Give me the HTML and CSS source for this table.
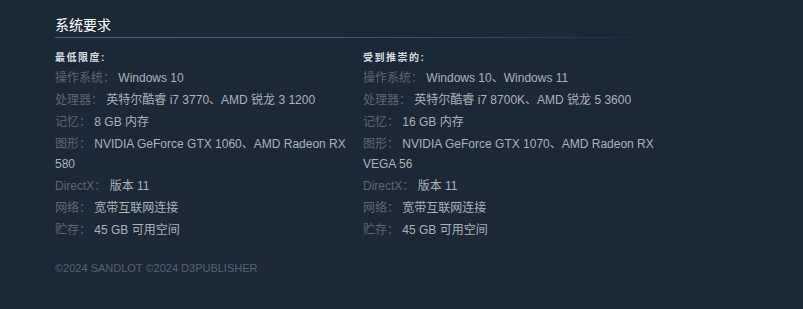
FILE: index.html
```html
<!DOCTYPE html>
<html lang="zh-CN">
<head>
<meta charset="utf-8">
<title>系统要求</title>
<link rel="stylesheet" href="styles.css">
</head>
<body>
<div class="page">
  <h2 class="section-title">系统要求</h2>
  <div class="sysreq">
    <div class="col">
      <div class="col-head">最低限度:</div>
      <ul class="req-list">
        <li><span class="label">操作系统：</span> Windows 10</li>
        <li><span class="label">处理器：</span> 英特尔酷睿 i7 3770、AMD 锐龙 3 1200</li>
        <li><span class="label">记忆：</span> 8 GB 内存</li>
        <li><span class="label">图形：</span> NVIDIA GeForce GTX 1060、AMD Radeon RX 580</li>
        <li><span class="label">DirectX：</span> 版本 11</li>
        <li><span class="label">网络：</span> 宽带互联网连接</li>
        <li><span class="label">贮存：</span> 45 GB 可用空间</li>
      </ul>
    </div>
    <div class="col">
      <div class="col-head">受到推崇的:</div>
      <ul class="req-list">
        <li><span class="label">操作系统：</span> Windows 10、Windows 11</li>
        <li><span class="label">处理器：</span> 英特尔酷睿 i7 8700K、AMD 锐龙 5 3600</li>
        <li><span class="label">记忆：</span> 16 GB 内存</li>
        <li><span class="label">图形：</span> NVIDIA GeForce GTX 1070、AMD Radeon RX VEGA 56</li>
        <li><span class="label">DirectX：</span> 版本 11</li>
        <li><span class="label">网络：</span> 宽带互联网连接</li>
        <li><span class="label">贮存：</span> 45 GB 可用空间</li>
      </ul>
    </div>
  </div>
  <div class="legal">©2024 SANDLOT ©2024 D3PUBLISHER</div>
</div>
</body>
</html>
```

FILE: styles.css
```css
html, body {
  margin: 0;
  padding: 0;
  background: #1b2838;
}

body {
  font-family: "Liberation Sans", Arial, "Noto Sans CJK SC", sans-serif;
  color: #acb2b8;
  height: 309px;
  overflow: hidden;
}

.page {
  padding: 15px 0 0 55px;
  width: 716px;
}

.section-title {
  margin: 0;
  font-size: 14px;
  line-height: 20px;
  font-weight: normal;
  color: #ffffff;
  padding-bottom: 3px;
  background-image: linear-gradient(to right, #3b6a84 0%, #365f78 45%, rgba(53, 93, 118, 0) 85%);
  background-repeat: no-repeat;
  background-position: left bottom;
  background-size: 100% 1px;
}

.sysreq {
  display: grid;
  grid-template-columns: 296px 296px;
  column-gap: 12px;
  margin-top: 12px;
}

.col-head {
  font-size: 10px;
  line-height: 16px;
  font-weight: bold;
  letter-spacing: 1.5px;
  color: #dcdedf;
}

.req-list {
  list-style: none;
  margin: 2px 0 0;
  padding: 0;
  font-size: 12px;
  line-height: 20px;
}

.req-list li {
  margin-bottom: 2px;
}

.label {
  color: #5f666d;
}

.legal {
  margin-top: 19px;
  font-size: 11px;
  line-height: 14px;
  color: #556270;
}
```
